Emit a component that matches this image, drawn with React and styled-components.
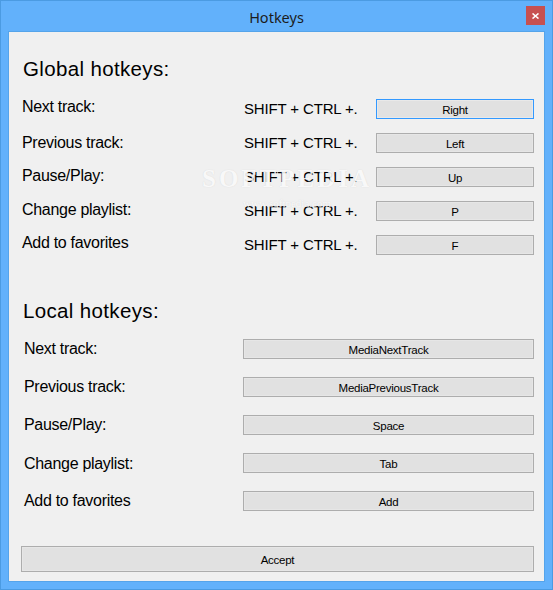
import React from 'react'
import styled, { createGlobalStyle } from 'styled-components'

const Global = createGlobalStyle`
  html, body {
    margin: 0;
    padding: 0;
    background: #62b1fb;
  }
  * { box-sizing: border-box; }
`

const Window = styled.div`
  width: 553px;
  height: 590px;
  background: #62b1fb;
  border: 1px solid #4b9be2;
  display: flex;
  flex-direction: column;
  font-family: "Liberation Sans", Arial, sans-serif;
  color: #000;
`

const TitleBar = styled.div`
  height: 30px;
  display: grid;
  grid-template-columns: 1fr auto 1fr;
  align-items: start;
  padding: 5px 7px 0 7px;
`

const Title = styled.div`
  grid-column: 2;
  font-family: "Noto Sans", "Open Sans", sans-serif;
  font-size: 14.5px;
  line-height: 20px;
  padding-top: 1px;
  color: #1c1c1c;
`

const CloseBtn = styled.div`
  grid-column: 3;
  justify-self: end;
  width: 19px;
  height: 19px;
  background: #c75050;
  display: flex;
  align-items: center;
  justify-content: center;
`

const Client = styled.div`
  flex: 1;
  margin: 0 7px 7px 7px;
  background: #f0f0f0;
  border: 1px solid #55a4ea;
  padding: 25px 10px 9px 12px;
  display: flex;
  flex-direction: column;
  position: relative;
`

const Heading = styled.div`
  font-size: 20.5px;
  line-height: 24px;
  letter-spacing: 0.35px;
  margin-left: 2px;
  margin-top: ${p => p.$top || 0}px;
`

const GlobalRow = styled.div`
  display: grid;
  grid-template-columns: 222px 132px 1fr;
  align-items: center;
  height: 34px;
  margin-left: 1px;
`

const LocalRow = styled.div`
  display: grid;
  grid-template-columns: 219px 1fr;
  align-items: center;
  height: 38px;
  margin-left: 3px;
`

const Label = styled.div`
  font-size: 16px;
  letter-spacing: -0.3px;
  line-height: 18px;
  margin-top: ${p => p.$shift || 0}px;
`

const Combo = styled.div`
  font-size: 15px;
  letter-spacing: -0.15px;
  line-height: 18px;
  margin-top: -1px;
`

const KeyButton = styled.div`
  height: ${p => p.$h || 20}px;
  border: 1px solid ${p => (p.$focused ? '#3399ff' : '#adadad')};
  background: #e1e1e1;
  box-shadow: inset 0 0 0 1px ${p => (p.$focused ? '#e9e9e9' : '#e6e6e6')};
  display: flex;
  align-items: center;
  justify-content: center;
  font-size: 11.5px;
  letter-spacing: -0.25px;
  padding-top: 1px;
`

const Footer = styled.div`
  margin-top: 26px;
`

const Watermark = styled.div`
  position: absolute;
  left: 193px;
  top: 133px;
  pointer-events: none;
  color: rgba(255, 255, 255, 0.85);
  text-shadow: 0 0 1px rgba(160, 160, 160, 0.35);
  font-family: "Liberation Serif", serif;
  text-align: center;
`

const WmBig = styled.div`
  font-size: 25px;
  letter-spacing: 3px;
  font-weight: bold;
`

const WmSmall = styled.div`
  font-size: 11px;
  margin-top: 4px;
`

const globalKeys = [
  { label: 'Next track:', key: 'Right', focused: true, shift: -4 },
  { label: 'Previous track:', key: 'Left', shift: -1 },
  { label: 'Pause/Play:', key: 'Up', shift: -2 },
  { label: 'Change playlist:', key: 'P', shift: -2 },
  { label: 'Add to favorites', key: 'F', shift: -4 },
]

const localKeys = [
  { label: 'Next track:', key: 'MediaNextTrack' },
  { label: 'Previous track:', key: 'MediaPreviousTrack' },
  { label: 'Pause/Play:', key: 'Space' },
  { label: 'Change playlist:', key: 'Tab', shift: 2 },
  { label: 'Add to favorites', key: 'Add' },
]

export default function App() {
  return (
    <>
      <Global />
      <Window>
        <TitleBar>
          <Title>Hotkeys</Title>
          <CloseBtn>
            <svg width="7" height="6" viewBox="0 0 7 6">
              <path d="M0.5 0.5 L6.5 5.5 M6.5 0.5 L0.5 5.5" stroke="#fff" strokeWidth="1.6" />
            </svg>
          </CloseBtn>
        </TitleBar>
        <Client>
          <Heading>Global hotkeys:</Heading>
          <div style={{ height: 11 }} />
          {globalKeys.map(k => (
            <GlobalRow key={k.key}>
              <Label $shift={k.shift}>{k.label}</Label>
              <Combo>SHIFT + CTRL +.</Combo>
              <KeyButton $focused={k.focused}>{k.key}</KeyButton>
            </GlobalRow>
          ))}
          <Heading $top={37}>Local hotkeys:</Heading>
          <div style={{ height: 7 }} />
          {localKeys.map(k => (
            <LocalRow key={k.key}>
              <Label $shift={k.shift}>{k.label}</Label>
              <KeyButton>{k.key}</KeyButton>
            </LocalRow>
          ))}
          <Footer>
            <KeyButton $h={26}>Accept</KeyButton>
          </Footer>
          <Watermark>
            <WmBig>SOFTPEDIA</WmBig>
            <WmSmall>www.softpedia.com</WmSmall>
          </Watermark>
        </Client>
      </Window>
    </>
  )
}
